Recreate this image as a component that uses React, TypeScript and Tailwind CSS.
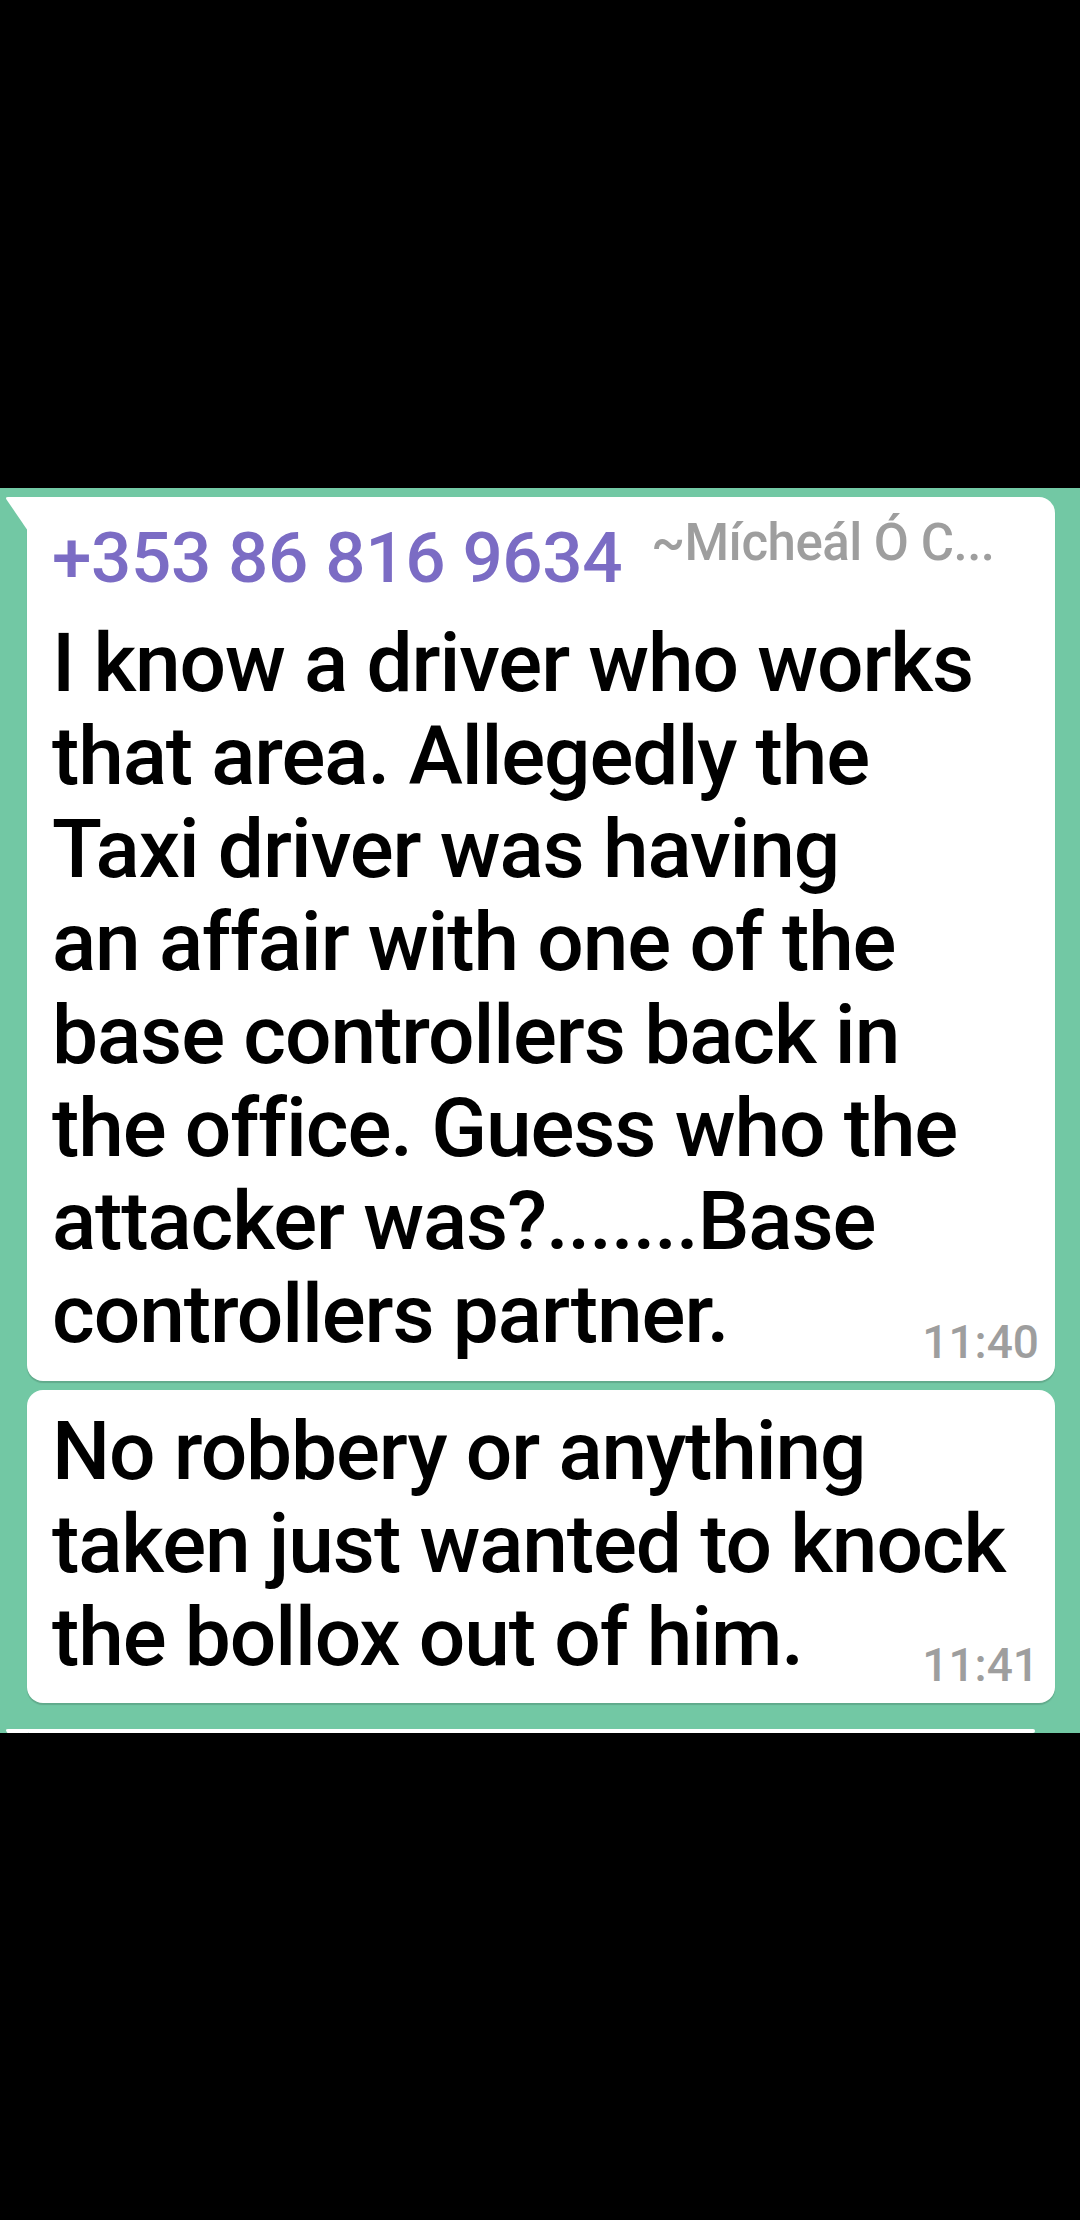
import React from "react";

const firstLines = [
  "I know a driver who works",
  "that area. Allegedly the",
  "Taxi driver was having",
  "an affair with one of the",
  "base controllers back in",
  "the office. Guess who the",
  "attacker was?.......Base",
];

const secondLines = ["No robbery or anything", "taken just wanted to knock"];

function Tail() {
  return (
    <svg
      className="absolute -left-[22px] top-0"
      width="23"
      height="34"
      viewBox="0 0 23 34"
    >
      <path d="M23 0 L3 0 Q0 0 1.5 2.5 L23 34 Z" fill="#ffffff" />
    </svg>
  );
}

function Body({ lines, last, time }: { lines: string[]; last: string; time: string }) {
  return (
    <div className="text-[82px] leading-[93px] font-medium tracking-[-1.1px] text-black">
      {lines.map((l) => (
        <div key={l} className="whitespace-nowrap">
          {l}
        </div>
      ))}
      <div className="flex items-end justify-between whitespace-nowrap">
        <span>{last}</span>
        <span className="text-[46px] leading-[38px] tracking-normal text-[#9e9e9e]">{time}</span>
      </div>
    </div>
  );
}

export default function App() {
  return (
    <div className="w-[1080px] h-[2220px] bg-black flex flex-col font-['Roboto',sans-serif]">
      <div className="h-[488px] shrink-0" />

      <div className="h-[1245px] shrink-0 bg-[#72c8a4] overflow-hidden flex flex-col pt-[9px] pr-[25px]">
        {/* first message, with sender header */}
        <div className="relative ml-[27px] bg-white rounded-[16px] rounded-tl-none shadow-[0_2px_1px_rgba(0,0,0,0.15)] pt-[21px] pb-[20px] pl-[25px] pr-[16px]">
          <Tail />
          <div className="flex items-start gap-[29px] mb-[19px] font-medium">
            <span className="text-[71px] leading-[80px] tracking-[-0.4px] text-[#7b6cc4] whitespace-nowrap">
              +353 86 816 9634
            </span>
            <span className="text-[51px] leading-[50px] tracking-[-0.5px] text-[#9e9e9e] whitespace-nowrap">
              ~Mícheál Ó C...
            </span>
          </div>
          <Body lines={firstLines} last="controllers partner." time="11:40" />
        </div>

        {/* follow-up */}
        <div className="ml-[27px] mt-[9px] bg-white rounded-[16px] shadow-[0_2px_1px_rgba(0,0,0,0.15)] pt-[15px] pb-[19px] pl-[25px] pr-[16px]">
          <Body lines={secondLines} last="the bollox out of him." time="11:41" />
        </div>

        {/* next message, cut off at the screen edge */}
        <div className="relative ml-[27px] mt-[26px] w-[1008px] h-[80px] bg-white rounded-[16px] rounded-tl-none">
          <Tail />
        </div>
      </div>

      <div className="flex-1" />
    </div>
  );
}
